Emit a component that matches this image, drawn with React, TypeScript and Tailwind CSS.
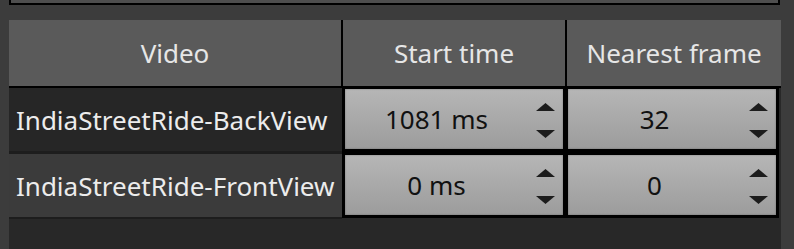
import React from "react"

const rows = [
  { name: "IndiaStreetRide-BackView", start: "1081 ms", frame: "32", bg: "bg-[#262626]" },
  { name: "IndiaStreetRide-FrontView", start: "0 ms", frame: "0", bg: "bg-[#3b3b3b]" },
]

function Arrow({ down }: { down?: boolean }) {
  return (
    <svg width="21" height="10" viewBox="0 0 21 10" className="block">
      <defs>
        <filter id="soft" x="-20%" y="-40%" width="140%" height="180%">
          <feGaussianBlur stdDeviation="0.55" />
        </filter>
      </defs>
      <polygon
        points={down ? "1,1 20,1 10.5,9" : "10.5,1 20,9 1,9"}
        fill="#1c1c1c"
        filter="url(#soft)"
      />
    </svg>
  )
}

function SpinBox({ value, width }: { value: string; width: string }) {
  return (
    <div
      className={`${width} h-[60px] flex bg-gradient-to-b from-[#b6b6b6] to-[#9c9c9c] shadow-[inset_0_0_2px_rgba(0,0,0,0.35)]`}
    >
      <div className="flex-1 flex items-center justify-center text-[#111] text-[26px] leading-none">
        {value}
      </div>
      <div className="w-[35px] flex flex-col items-center justify-center gap-[17px] pr-[1px] mt-[3px]">
        <Arrow />
        <Arrow down />
      </div>
    </div>
  )
}

export default function App() {
  return (
    <div className="w-[794px] h-[249px] bg-[#3c3c3c] overflow-hidden font-['Noto_Sans','Open_Sans',sans-serif]">
      <div className="ml-[9px] w-[771px] h-[5px] bg-[#4e4e4e] border-x-2 border-b-2 border-black" />

      <div className="ml-[9px] mt-[15px] w-[772px] h-[229px] bg-[#282828] flex flex-col">
        {/* header */}
        <div className="flex h-[66px] bg-[#5a5a5a] text-[#e6e6e6] text-[26px]">
          <div className="w-[334px] flex items-center justify-center border-r-2 border-black">Video</div>
          <div className="w-[224px] flex items-center justify-center border-r-2 border-black">Start time</div>
          <div className="flex-1 flex items-center justify-center">Nearest frame</div>
        </div>
        <div className="h-[2px] bg-black" />

        {/* body */}
        <div className="flex">
          <div className="w-[333px] flex flex-col">
            {rows.map((r, i) => (
              <React.Fragment key={r.name}>
                <div
                  className={`h-[63px] ${r.bg} flex items-center pl-[7px] pt-[2px] text-[#ececec] text-[26px] whitespace-nowrap`}
                >
                  {r.name}
                </div>
                <div className={i === 0 ? "h-[3px] bg-[#1d1d1d]" : "h-[2px] bg-[#1d1d1d]"} />
              </React.Fragment>
            ))}
          </div>
          <div className="w-[437px] h-[130px] bg-black pl-[3px] pr-[3px] pt-[1px] flex flex-col gap-[6px]">
            {rows.map((r) => (
              <div key={r.name} className="flex gap-[5px]">
                <SpinBox value={r.start} width="w-[218px]" />
                <SpinBox value={r.frame} width="w-[208px]" />
              </div>
            ))}
          </div>
        </div>
      </div>
    </div>
  )
}
